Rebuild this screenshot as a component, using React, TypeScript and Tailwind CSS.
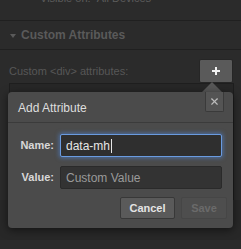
import { X } from 'lucide-react';

export default function App() {
  return (
    <div className="relative h-[249px] w-[241px] overflow-hidden bg-[#2b2b2b] font-['Liberation_Sans',Arial,sans-serif] select-none">
      {/* previous section, scrolled mostly out of view */}
      <div className="flex h-[21px] items-start border-b border-[#202020] pl-[40px]">
        <p className="-mt-[8px] text-[11px] leading-[12px] text-[#5c5c5c]">Visible on:&nbsp;&nbsp;All Devices</p>
      </div>

      {/* section header */}
      <div className="flex h-[29px] items-center gap-[5px] border-b border-[#202020] pl-[10px]">
        <svg width="6" height="4" viewBox="0 0 6 4" className="mt-[1px]">
          <path d="M0 0 L6 0 L3 4 Z" fill="#5a5a5a" />
        </svg>
        <span className="text-[12px] font-bold text-[#5a5a5a]">Custom Attributes</span>
      </div>

      {/* label row */}
      <div className="flex items-start justify-between pl-[9px] pr-[8px] pt-[9px]">
        <span className="mt-[4px] text-[11px] text-[#575757]">Custom &lt;div&gt; attributes:</span>
        <button className="flex h-[24px] w-[34px] items-center justify-center rounded-[2px] border border-[#262626] bg-[#5a5a5a]">
          <svg width="10" height="10" viewBox="0 0 10 10">
            <path d="M5 1 V9 M1 5 H9" stroke="#f2f2f2" strokeWidth="2" />
          </svg>
        </button>
      </div>

      {/* attribute list box, mostly covered by the popover */}
      <div className="ml-[9px] mr-[7px] h-[117px] border border-[#1e1e1e] bg-[#272727]" />
      <div className="h-[40px] bg-[#282828]" />

      {/* popover arrow */}
      <svg width="22" height="11" viewBox="0 0 22 11" className="absolute left-[201px] top-[82px]">
        <path d="M11 0 L22 11 L0 11 Z" fill="#575757" />
      </svg>

      {/* popover */}
      <div className="absolute left-[8px] top-[92px] h-[136px] w-[225px] rounded-[4px] bg-[#4b4b4b] shadow-[0_2px_8px_rgba(0,0,0,0.55)]">
        <div className="flex h-[31px] items-center border-b border-[#3b3b3b] pl-[10px]">
          <span className="mt-[1px] text-[12px] text-[#dedede]">Add Attribute</span>
        </div>
        <button className="absolute right-[9px] top-0 flex h-[20px] w-[19px] items-center justify-center rounded-b-[2px] border border-t-0 border-[#3a3a3a] bg-[#545454]">
          <X size={11} strokeWidth={2.5} color="#bdbdbd" />
        </button>

        <div className="grid grid-cols-[46px_1fr] items-center gap-x-[6px] gap-y-[9px] pr-[11px] pt-[11px]">
          <span className="text-right text-[11px] font-bold text-[#d8d8d8]">Name:</span>
          <div className="flex h-[23px] items-center rounded-[2px] border border-[#6a9be0] bg-[#2f2f2f] pl-[5px] shadow-[0_0_4px_1px_rgba(80,140,230,0.55)]">
            <span className="text-[12px] text-[#e6e6e6]">data-mh</span>
            <span className="ml-[1px] h-[14px] w-px bg-[#e6e6e6]" />
          </div>
          <span className="text-right text-[11px] font-bold text-[#d8d8d8]">Value:</span>
          <div className="flex h-[23px] items-center rounded-[2px] border border-[#2a2a2a] bg-[#333333] pl-[5px]">
            <span className="text-[12px] text-[#9a9a9a]">Custom Value</span>
          </div>
        </div>

        <div className="mt-[8px] flex justify-end gap-[6px] pr-[6px]">
          <button className="h-[22px] w-[55px] rounded-[2px] border border-[#383838] bg-[#5a5a5a] text-[11px] font-bold text-[#e4e4e4]">
            Cancel
          </button>
          <button className="h-[22px] w-[46px] rounded-[2px] border border-[#464646] bg-[#4e4e4e] text-[11px] font-bold text-[#6a6a6a]">
            Save
          </button>
        </div>
      </div>
    </div>
  );
}
